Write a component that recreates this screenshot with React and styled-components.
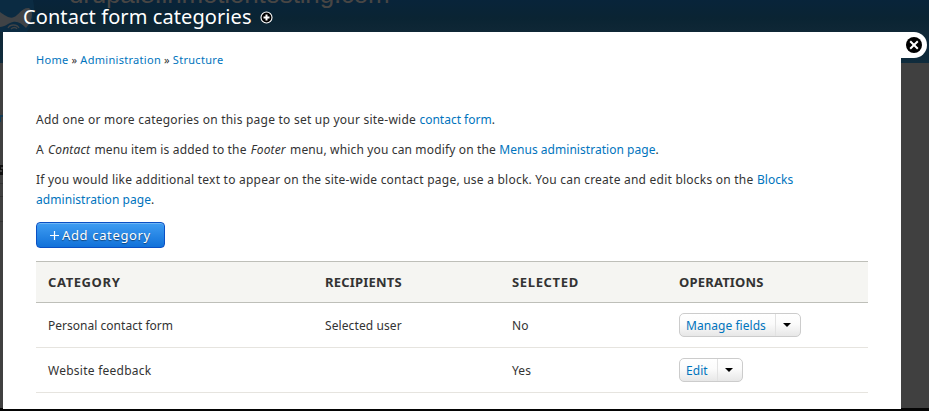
import React from "react";
import styled, { createGlobalStyle } from "styled-components";

const GlobalStyle = createGlobalStyle`
  * { box-sizing: border-box; }
  body { margin: 0; overflow: hidden; background: #000; }
`;

const Screen = styled.div`
  position: relative;
  width: 929px;
  height: 411px;
  overflow: hidden;
  background: #050505;
  color: #333;
  font-family: "Noto Sans", "Open Sans", sans-serif;
  font-size: 12px;
`;

/* Dimmed site behind the overlay */
const Backdrop = styled.div`
  position: absolute;
  inset: 0 0 3px 0;
  overflow: hidden;
  background: #404040;
`;

const SiteHeader = styled.div`
  position: relative;
  height: 63px;
  background: linear-gradient(#08243a, #0a2433 18px, #0f2736 32px, #102c3d);
`;

const SiteLogo = styled.svg`
  position: absolute;
  left: 0;
  top: 0;
`;

const SiteName = styled.div`
  position: absolute;
  left: 69px;
  top: -21px;
  color: #484644;
  font-family: "Liberation Sans", Arial, sans-serif;
  font-size: 26px;
  line-height: 30px;
  letter-spacing: -0.17px;
  white-space: nowrap;
`;

const SiteEdge = styled.svg`
  position: absolute;
  left: 0;
  top: 63px;
`;

const Overlay = styled.div`
  position: relative;
  display: flex;
  flex-direction: column;
  height: 409px;
  padding-left: 3px;
`;

const TitleBar = styled.header`
  display: flex;
  align-items: center;
  gap: 8px;
  height: 32px;
  padding: 2px 0 0 20px;
`;

const TitleIcon = styled.svg`
  margin-top: 1px;
`;

const Title = styled.h1`
  margin: 0;
  color: #fff;
  font-size: 20px;
  font-weight: 400;
  line-height: 28px;
  letter-spacing: 0.08px;
  white-space: nowrap;
`;

const Frame = styled.div`
  display: flex;
  flex: 1;
  align-items: flex-start;
`;

const Panel = styled.main`
  align-self: stretch;
  width: 898px;
  padding: 18px 33px 0;
  background: #fff;
`;

const CloseTab = styled.button`
  display: flex;
  align-items: center;
  width: 26px;
  height: 26px;
  padding: 0 0 0 5px;
  border: 0;
  border-radius: 0 13px 13px 0;
  background: #fff;
`;

const Link = styled.a`
  color: #0074bd;
  letter-spacing: ${(p) => p.$spacing || "inherit"};
  text-decoration: none;
`;

const Breadcrumb = styled.nav`
  height: 60px;
  font-size: 11px;
  line-height: 20px;
  letter-spacing: 0.29px;
  word-spacing: -0.15px;
`;

const HelpText = styled.p`
  margin: 0 0 10px;
  line-height: 20px;
  letter-spacing: ${(p) => p.$spacing};
  white-space: nowrap;
`;

const Term = styled.em`
  margin: 0 1px 0 1px;
`;

const AddButton = styled.button`
  display: flex;
  align-items: center;
  gap: 3px;
  width: 129px;
  height: 26px;
  margin: 12px 0 13px;
  padding: 0 0 0 13px;
  border: 1px solid #0a50c4;
  border-radius: 4px;
  background: linear-gradient(#3f9df2, #1171d9);
  box-shadow: inset 0 1px 0 rgba(255, 255, 255, 0.25);
  color: #fff;
  font-family: inherit;
  font-size: 13px;
  line-height: 20px;
  letter-spacing: 0.65px;
  text-shadow: 0 1px 1px rgba(0, 0, 0, 0.45);
  white-space: nowrap;
`;

const Table = styled.div`
  width: 832px;
  border-top: 1px solid #bebfb9;
`;

const Row = styled.div`
  display: grid;
  grid-template-columns: 277px 187px 167px 1fr;
  align-items: center;
  height: 45px;
  padding: 0 12px;
  border-bottom: 1px solid #e6e4df;
  line-height: 20px;
`;

const HeadRow = styled(Row)`
  height: 41px;
  border-bottom-color: #bebfb9;
  background: #f5f5f2;
  font-size: 13px;
  font-weight: 700;
`;

const HeadCell = styled.div`
  letter-spacing: ${(p) => p.$spacing};
`;

const Cell = styled.div`
  padding-top: 2px;
  letter-spacing: ${(p) => p.$spacing || "0.1px"};
`;

const ActionCell = styled.div`
  letter-spacing: 0.05px;
`;

const DropButton = styled.div`
  display: flex;
  width: ${(p) => p.$width};
  height: 24px;
  border: 1px solid #ccc;
  border-radius: 5px;
  background: linear-gradient(#fff, #fbfbfb 45%, #e7e7e7);
`;

const DropAction = styled(Link)`
  flex: 1;
  padding-left: 6px;
  line-height: 23px;
  white-space: nowrap;
`;

const DropToggle = styled.span`
  display: flex;
  width: 25px;
  padding: 9px 0 0 7px;
  border-left: 1px solid #e2e2e2;
`;

const columns = [
  ["CATEGORY", "0.6px"],
  ["RECIPIENTS", "0.2px"],
  ["SELECTED", "0.65px"],
  ["OPERATIONS", "0.18px"],
];

const rows = [
  { name: "Personal contact form", spacing: "0.02px", recipient: "Selected user", selected: "No", action: "Manage fields", width: "122px" },
  { name: "Website feedback", spacing: "0.25px", recipient: "", selected: "Yes", action: "Edit", width: "64px" },
];

export default function App() {
  return (
    <Screen>
      <GlobalStyle />
      <Backdrop>
        <SiteHeader>
          <SiteLogo width="40" height="63" viewBox="0 0 40 63" fill="none">
            <path d="M0 0H33C36 12 33 23 27 32H0Z" fill="#0b2b42" />
            <path d="M0 12C6 16 10 19 14 17C19 15 22 7 29 8C35 12 31 23 26 28C22 24 18 21 13 22C8 23 5 27 0 27Z" fill="#404346" />
            <path d="M8 28C10 24 17 24 19 28M11 29C13 27 16 27 17 29" stroke="#404346" strokeWidth="1.3" />
          </SiteLogo>
          <SiteName>drupal8.inmotiontesting.com</SiteName>
        </SiteHeader>
        <SiteEdge width="3" height="345" viewBox="0 0 3 345">
          <path d="M0 52H3V54H1V59H0Z" fill="#153c54" />
          <path d="M0 102H3V104H1V106H3V111H0V109H2V107H0Z" fill="#111" />
          <path d="M0 111H3V112H0Z" fill="#111" />
          <path d="M0 120.5H3M0 133.5H3M0 158.5H3" stroke="#333" />
        </SiteEdge>
      </Backdrop>

      <Overlay>
        <TitleBar>
          <Title>Contact form categories</Title>
          <TitleIcon width="13" height="13" viewBox="0 0 13 13" fill="none">
            <circle cx="6.5" cy="6.5" r="5.5" fill="#000" stroke="#fff" strokeWidth="1.1" />
            <path d="M6.5 3.5V9.5M3.5 6.5H9.5" stroke="#fff" strokeWidth="2" />
          </TitleIcon>
        </TitleBar>
        <Frame>
          <Panel>
            <Breadcrumb>
              <Link>Home</Link> » <Link>Administration</Link> » <Link>Structure</Link>
            </Breadcrumb>
            <HelpText $spacing="0.23px">
              Add one or more categories on this page to set up your site-wide <Link $spacing="0">contact form</Link>.
            </HelpText>
            <HelpText $spacing="0.15px">
              A <Term>Contact</Term> menu item is added to the <Term>Footer</Term> menu, which you can modify on the{" "}
              <Link $spacing="0.04px">Menus administration page</Link>.
            </HelpText>
            <HelpText $spacing="0.231px">
              If you would like additional text to appear on the site-wide contact page, use a block. You can create and edit blocks on the{" "}
              <Link $spacing="0.06px">
                Blocks
                <br />
                administration page
              </Link>
              .
            </HelpText>
            <AddButton>
              <svg width="9" height="9" viewBox="0 0 9 9">
                <path d="M4.5 0V9M0 4.5H9" stroke="#fff" strokeWidth="1.2" />
              </svg>
              Add category
            </AddButton>
            <Table>
              <HeadRow>
                {columns.map(([label, spacing]) => (
                  <HeadCell key={label} $spacing={spacing}>{label}</HeadCell>
                ))}
              </HeadRow>
              {rows.map((row) => (
                <Row key={row.name}>
                  <Cell $spacing={row.spacing}>{row.name}</Cell>
                  <Cell>{row.recipient}</Cell>
                  <Cell>{row.selected}</Cell>
                  <ActionCell>
                    <DropButton $width={row.width}>
                      <DropAction>{row.action}</DropAction>
                      <DropToggle>
                        <svg width="8" height="4" viewBox="0 0 8 4">
                          <path d="M0 0H8L4 4Z" fill="#000" />
                        </svg>
                      </DropToggle>
                    </DropButton>
                  </ActionCell>
                </Row>
              ))}
            </Table>
          </Panel>
          <CloseTab aria-label="Close">
            <svg width="16" height="16" viewBox="0 0 16 16">
              <circle cx="8" cy="8" r="8" fill="#000" />
              <path d="M4.2 4.2L11.8 11.8M11.8 4.2L4.2 11.8" stroke="#fff" strokeWidth="2" />
            </svg>
          </CloseTab>
        </Frame>
      </Overlay>
    </Screen>
  );
}
